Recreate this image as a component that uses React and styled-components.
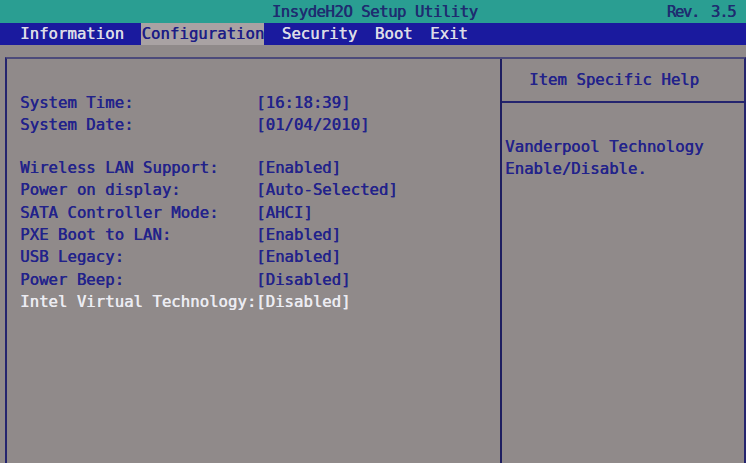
import React from 'react'
import styled, { createGlobalStyle } from 'styled-components'

const Global = createGlobalStyle`
  html, body {
    margin: 0;
    padding: 0;
    background: #908a8a;
  }
  body {
    font-family: "DejaVu Sans Mono", "Liberation Mono", monospace;
  }
`

const Screen = styled.div`
  width: 746px;
  height: 463px;
  overflow: hidden;
  display: flex;
  flex-direction: column;
  background: #908a8a;
  font-size: 15.7px;
  text-shadow: 0.5px 0 0 currentColor;
`

const TitleBar = styled.div`
  height: 23px;
  background: #2a9e92;
  color: #1e2c70;
  display: flex;
  align-items: center;
  padding: 0 11px 0 0;
`

const Title = styled.div`
  flex: 1;
  text-align: center;
  padding-left: 104px;
  letter-spacing: -0.5px;
`

const Rev = styled.div`
  width: 90px;
  text-align: right;
  letter-spacing: -1.4px;
  word-spacing: 4px;
`

const MenuBar = styled.div`
  height: 22px;
  background: #1a1a9e;
  display: flex;
  align-items: center;
  gap: 17.5px;
  padding-left: 20px;
`

const MenuItem = styled.div`
  height: 22px;
  line-height: 22px;
  background: ${({ $active }) => ($active ? '#a9a2a3' : 'transparent')};
  color: ${({ $active }) => ($active ? '#1c1c86' : '#dcdce6')};
`

const Frame = styled.div`
  flex: 1;
  margin: 12px 0 0 5px;
  border-top: 2px solid #4c4a7a;
  border-left: 2px solid #24246e;
  border-right: 2px solid #24246e;
  display: grid;
  grid-template-columns: 495px 1fr;
`

const Settings = styled.div`
  padding: 33px 0 0 13px;
  border-right: 2px solid #1e1e60;
`

const Row = styled.div`
  display: flex;
  height: 22.4px;
  line-height: 22.4px;
  color: ${({ $selected }) => ($selected ? '#ececf2' : '#22228a')};
  white-space: pre;
`

const Gap = styled.div`
  height: 20px;
`

const Label = styled.div`
  width: 236px;
`

const Value = styled.div``

const Help = styled.div`
  display: flex;
  flex-direction: column;
`

const HelpHeader = styled.div`
  height: 42px;
  border-bottom: 2px solid #24246e;
  color: #22228a;
  text-align: center;
  line-height: 42px;
  padding-right: 18px;
`

const HelpText = styled.div`
  padding: 33px 0 0 3px;
  color: #22228a;
  line-height: 22px;
`

const menu = ['Information', 'Configuration', 'Security', 'Boot', 'Exit']

const groups = [
  [
    ['System Time:', '[16:18:39]'],
    ['System Date:', '[01/04/2010]'],
  ],
  [
    ['Wireless LAN Support:', '[Enabled]'],
    ['Power on display:', '[Auto-Selected]'],
    ['SATA Controller Mode:', '[AHCI]'],
    ['PXE Boot to LAN:', '[Enabled]'],
    ['USB Legacy:', '[Enabled]'],
    ['Power Beep:', '[Disabled]'],
    ['Intel Virtual Technology:', '[Disabled]', true],
  ],
]

export default function App() {
  return (
    <>
      <Global />
      <Screen>
        <TitleBar>
          <Title>InsydeH2O Setup Utility</Title>
          <Rev>Rev. 3.5</Rev>
        </TitleBar>
        <MenuBar>
          {menu.map((m) => (
            <MenuItem key={m} $active={m === 'Configuration'}>{m}</MenuItem>
          ))}
        </MenuBar>
        <Frame>
          <Settings>
            {groups.map((g, i) => (
              <React.Fragment key={i}>
                {i > 0 && <Gap />}
                {g.map(([label, value, sel]) => (
                  <Row key={label} $selected={sel}>
                    <Label>{label}</Label>
                    <Value>{value}</Value>
                  </Row>
                ))}
              </React.Fragment>
            ))}
          </Settings>
          <Help>
            <HelpHeader>Item Specific Help</HelpHeader>
            <HelpText>
              Vanderpool Technology
              <br />
              Enable/Disable.
            </HelpText>
          </Help>
        </Frame>
      </Screen>
    </>
  )
}
